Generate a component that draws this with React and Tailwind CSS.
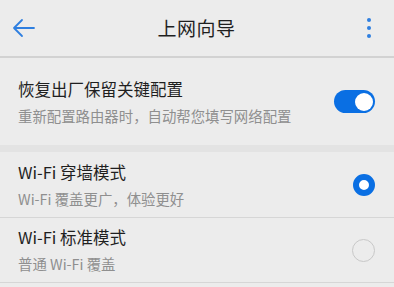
import React from 'react';

const font = { fontFamily: '"Noto Sans CJK SC", "Noto Sans", sans-serif' };

function Row({ title, sub, children }) {
  return (
    <div className="flex items-center justify-between px-[18px]">
      <div className="flex flex-col">
        <span className="text-[16.5px] leading-[22px] text-[#1f1f1f]">{title}</span>
        <span className="text-[14.4px] leading-[20px] mt-[6px] text-[#8f8f8f]">{sub}</span>
      </div>
      {children}
    </div>
  );
}

export default function App() {
  return (
    <div className="w-[394px] h-[287px] bg-[#ececec] overflow-hidden" style={font}>
      {/* header */}
      <div className="h-[58px] flex items-center justify-between border-b-2 border-[#d2d2d2] px-[12px]">
        <svg width="24" height="24" viewBox="0 0 24 24" fill="none" stroke="#2f7fe0" strokeWidth="1.8" strokeLinecap="round" strokeLinejoin="round">
          <path d="M22 12H2M10 4l-8 8 8 8" />
        </svg>
        <span className="text-[19px] text-[#1f1f1f] tracking-[0.5px]">上网向导</span>
        <div className="flex flex-col gap-[4px] items-center w-[24px] mr-[1px]">
          <span className="w-[4px] h-[4px] rounded-full bg-[#2f7fe0]" />
          <span className="w-[4px] h-[4px] rounded-full bg-[#2f7fe0]" />
          <span className="w-[4px] h-[4px] rounded-full bg-[#2f7fe0]" />
        </div>
      </div>

      {/* restore section */}
      <div className="h-[87px] flex flex-col justify-center">
        <Row title="恢复出厂保留关键配置" sub="重新配置路由器时，自动帮您填写网络配置">
          <div className="w-[41px] h-[23px] rounded-full bg-[#0a6fe3] flex items-center justify-end pr-[2px] mr-[1px]">
            <div className="w-[18px] h-[18px] rounded-full bg-white" />
          </div>
        </Row>
      </div>

      <div className="h-[7px] bg-[#e3e3e3]" />

      {/* modes */}
      <div className="h-[66px] flex flex-col justify-center border-b border-[#d6d6d6]">
        <Row title="Wi-Fi 穿墙模式" sub="Wi-Fi 覆盖更广，体验更好">
          <div className="w-[22px] h-[22px] rounded-full border-[6px] border-[#0a6fe3] bg-white mr-[1px]" />
        </Row>
      </div>
      <div className="h-[65px] flex flex-col justify-center border-b border-[#d6d6d6]">
        <Row title="Wi-Fi 标准模式" sub="普通 Wi-Fi 覆盖">
          <div className="w-[23px] h-[23px] rounded-full border-[1.5px] border-[#c8c8c8] mr-[1px]" />
        </Row>
      </div>
    </div>
  );
}
